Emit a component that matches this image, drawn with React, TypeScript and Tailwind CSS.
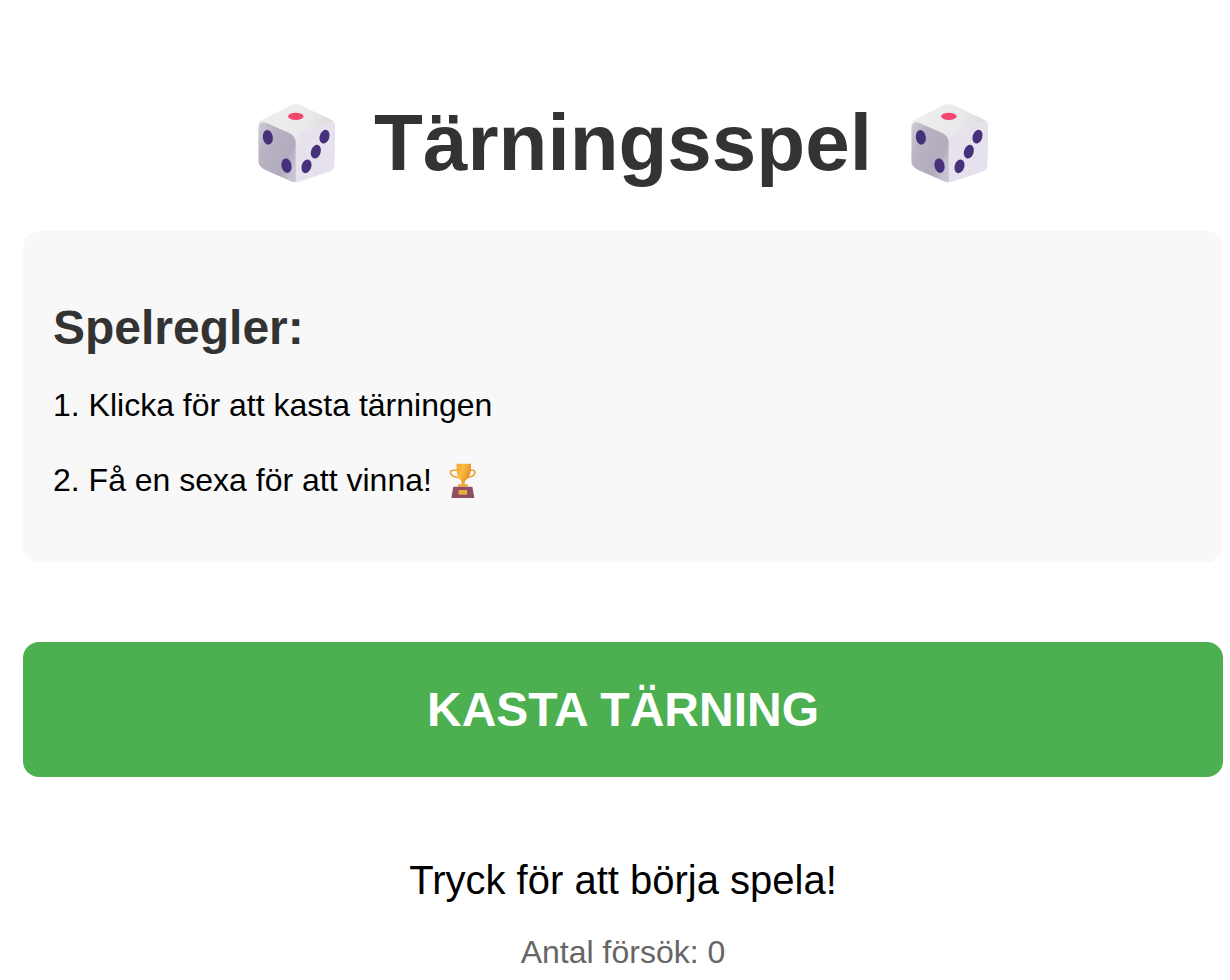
function Die({ id }: { id: string }) {
  return (
    <svg viewBox="55 40 230 237" className="w-[77px] h-[79px] shrink-0">
      <defs>
        <linearGradient id={`${id}-top`} x1="0" y1="0" x2="1" y2="0.5">
          <stop offset="0" stopColor="#f0eff0" />
          <stop offset="0.6" stopColor="#ebeaeb" />
          <stop offset="1" stopColor="#d2d1d4" />
        </linearGradient>
        <linearGradient id={`${id}-left`} x1="0" y1="0" x2="1" y2="0.7">
          <stop offset="0" stopColor="#d0ccd7" />
          <stop offset="0.3" stopColor="#b9b3c3" />
          <stop offset="0.8" stopColor="#b1abbd" />
          <stop offset="1" stopColor="#c8c3d2" />
        </linearGradient>
        <linearGradient id={`${id}-right`} x1="0" y1="0" x2="1" y2="1">
          <stop offset="0" stopColor="#e7e3ec" />
          <stop offset="1" stopColor="#e6e0ef" />
        </linearGradient>
      </defs>
      <path
        d="M56 105 Q55 92 70 85 L150 45 Q168 37 186 45 L270 85 Q285 92 285 105 L283 225 Q283 235 270 242 L180 272 Q165 278 150 270 L75 237 Q57 228 56 215 Z"
        fill={`url(#${id}-top)`}
      />
      <path
        d="M56 108 Q60 90 80 97 L150 128 Q168 138 168 160 L168 274 Q160 275 150 270 L75 237 Q57 228 56 215 Z"
        fill={`url(#${id}-left)`}
      />
      <path
        d="M168 160 Q170 130 195 122 L270 92 Q285 90 285 105 L283 225 Q283 235 270 242 L180 272 Q172 275 168 274 Z"
        fill={`url(#${id}-right)`}
      />
      <ellipse cx="168" cy="77" rx="23" ry="11" fill="#f2466e" />
      <ellipse cx="84" cy="140" rx="15" ry="22" transform="rotate(-8 84 140)" fill="#46307a" />
      <ellipse cx="140" cy="225" rx="15" ry="22" transform="rotate(-12 140 225)" fill="#46307a" />
      <ellipse cx="254" cy="138" rx="14.500" ry="21" transform="rotate(18 254 138)" fill="#46307a" />
      <ellipse cx="228" cy="183" rx="14.500" ry="21" transform="rotate(18 228 183)" fill="#46307a" />
      <ellipse cx="200" cy="227" rx="14.500" ry="21" transform="rotate(18 200 227)" fill="#46307a" />
    </svg>
  );
}

function Trophy() {
  return (
    <svg viewBox="55 15 82 112" className="w-[27px] h-[37px] shrink-0">
      <defs>
        <linearGradient id="cup" x1="0" y1="0" x2="1" y2="0.5">
          <stop offset="0" stopColor="#f4a22e" />
          <stop offset="0.45" stopColor="#fbbd3f" />
          <stop offset="1" stopColor="#e3862a" />
        </linearGradient>
      </defs>
      <path
        d="M80 40 H68 Q58 40 60 50 Q63 60 84 62 M118 40 H126 Q136 40 133 50 Q130 60 110 62"
        fill="none"
        stroke="#eda233"
        strokeWidth="5"
      />
      <path d="M78 20 H122 Q124 60 104 72 L102 82 H94 L92 72 Q76 60 78 20 Z" fill="url(#cup)" />
      <rect x="82" y="82" width="30" height="8" rx="3" fill="#f2ae38" />
      <path d="M68 90 H126 L132 124 H62 Z" fill="#8f4d66" />
      <rect x="84" y="100" width="26" height="14" fill="#e9ae3c" />
    </svg>
  );
}

export default function App() {
  return (
    <div className="min-h-[980px] bg-white pl-[23px] font-['Liberation_Sans',Arial,sans-serif] overflow-hidden">
      <div className="w-[1200px]">
        <h1 className="flex items-center justify-center gap-[39px] pt-[100px] h-[231px] pb-[45px] text-[80px] leading-[92px] font-bold text-[#333333]">
          <Die id="a" />
          <span>Tärningsspel</span>
          <Die id="b" />
        </h1>

        <div className="h-[331px] rounded-[16px] bg-[#f8f8f8] pl-[30px] pt-[69px]">
          <h2 className="text-[48px] leading-[55px] font-bold text-[#333333]">Spelregler:</h2>
          <p className="mt-[32px] text-[32px] leading-[37px] text-black">1. Klicka för att kasta tärningen</p>
          <p className="mt-[38px] flex items-center gap-[17px] text-[32px] leading-[37px] text-black">
            2. Få en sexa för att vinna!
            <Trophy />
          </p>
        </div>

        <button className="mt-[80px] block w-full h-[135px] rounded-[16px] bg-[#4caf50] text-[48px] font-bold text-white">
          KASTA TÄRNING
        </button>

        <p className="mt-[80px] text-center text-[40px] leading-[46px] text-black">Tryck för att börja spela!</p>
        <p className="mt-[31px] text-center text-[32px] leading-[37px] text-[#666666]">Antal försök: 0</p>
      </div>
    </div>
  );
}
